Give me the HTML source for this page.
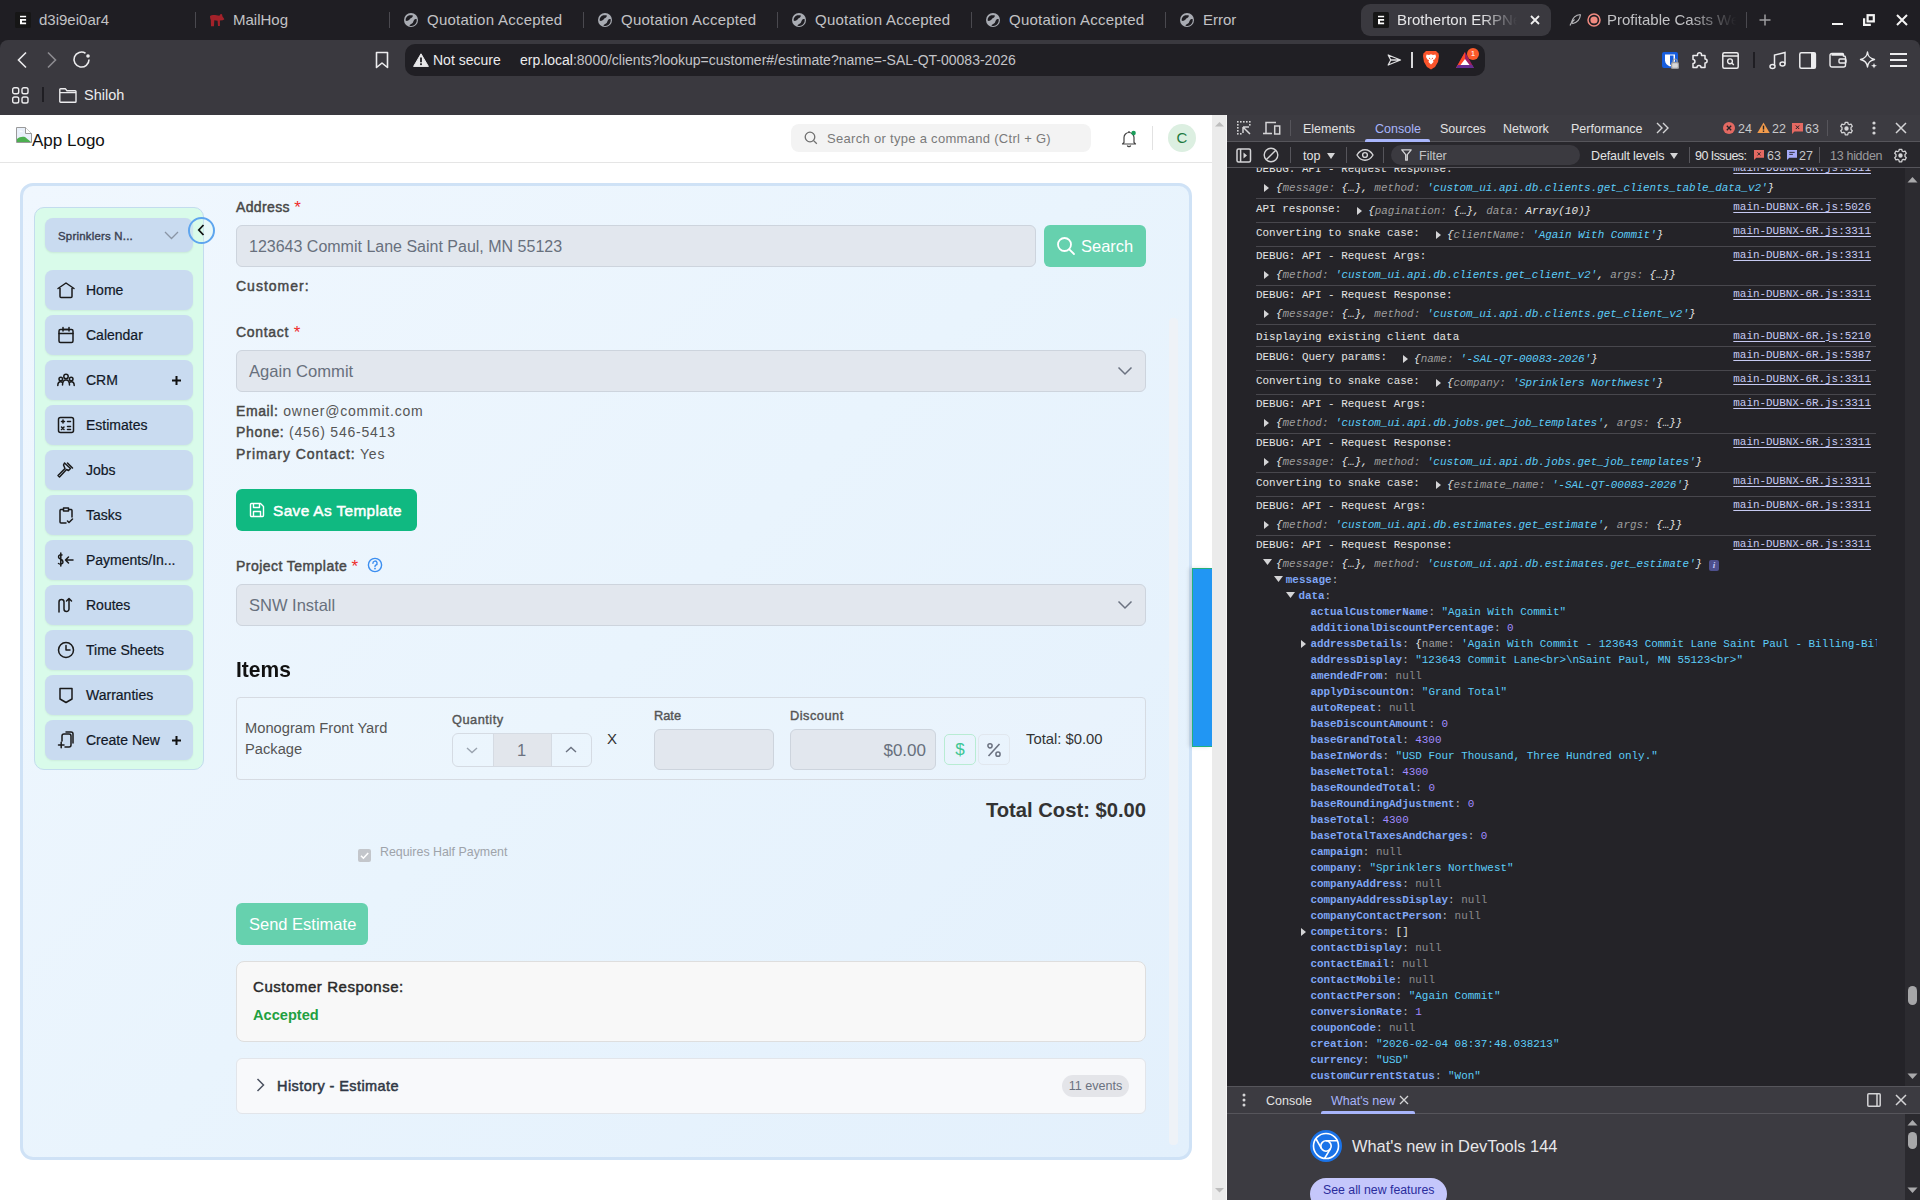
<!DOCTYPE html>
<html><head><meta charset="utf-8">
<style>
*{box-sizing:border-box;margin:0;padding:0}
html,body{width:1920px;height:1200px;overflow:hidden;background:#1f1e23;font-family:"Liberation Sans",sans-serif}
.a{position:absolute}
.t{position:absolute;white-space:nowrap}
svg{display:block}
#tabs{left:0;top:0;width:1920px;height:40px;background:#1f1e23}
.tab{color:#c2c2c5;font-size:15px;line-height:18px;top:11px}
.sep{width:1px;height:16px;background:#4a494f;top:12px}
#toolbar{left:0;top:40px;width:1920px;height:75px;background:#3a393f;border-top-left-radius:8px;border-top-right-radius:8px}
#url{left:405px;top:44px;width:1080px;height:32px;background:#201f24;border-radius:10px}
#page{left:0;top:115px;width:1228px;height:1085px;background:#fff;overflow:hidden}
#dt{left:1228px;top:115px;width:692px;height:1085px;background:#242328;overflow:hidden}
</style></head><body>
<style>
.nav{left:45px;width:148px;height:40px;background:#c9dbf0;border-radius:8px;box-shadow:0 1px 2px rgba(0,0,0,.06)}
.navt{left:86px;font-size:14px;line-height:18px;color:#111827;-webkit-text-stroke:.2px #111827}
</style>
<style>
.lbl{font-size:14px;line-height:17px;color:#474747;-webkit-text-stroke:.45px #474747;letter-spacing:.4px}
.lbl .req{-webkit-text-stroke:0;letter-spacing:0}
.req{color:#ef2b2b;font-size:17px;line-height:0;position:relative;top:1px}
.inp{background:#e2e7ee;border:1px solid #cdd4dd;border-radius:6px}
.val16{font-size:16px;line-height:19px;color:#68707d}
.info{font-size:14px;line-height:17px;color:#555;letter-spacing:.78px}
.info b{font-weight:normal;color:#474747;-webkit-text-stroke:.45px #474747}
.sml{font-size:12.8px;line-height:15px;color:#555;-webkit-text-stroke:.4px #555;letter-spacing:.49px}
</style>
<style>
.mono{font-family:"Liberation Mono",monospace;font-size:10.93px;line-height:14px;color:#e3e3e3}
.mono .w{color:#e3e3e3}.mono .g{color:#9e9e9e}.mono .s{color:#5ccdf8}.mono .n{color:#a18bff}.mono .z{color:#8b8b8d}
.mono .k{color:#7fa6f5;font-weight:bold}.mono .c{color:#b8b8ba}
.lnk{color:#c6c9f2;text-decoration:underline;text-underline-offset:2px}
</style>
<!-- ===== TAB STRIP ===== -->
<div id="tabs" class="a">
 <!-- tab1 -->
 <svg class="a" style="left:15px;top:12px" width="16" height="16" viewBox="0 0 16 16"><rect width="16" height="16" rx="1.5" fill="#161616"/><rect x="5" y="3.8" width="6.1" height="1.5" fill="#fff"/><path d="M5 7.1 H11.1 V8.7 H7 V10.4 H11.1 V12.2 H5 Z" fill="#fff"/></svg>
 <div class="t tab" style="left:39px">d3i9ei0ar4</div>
 <div class="a sep" style="left:195px"></div>
 <!-- tab2 mailhog -->
 <svg class="a" style="left:206px;top:10px" width="22" height="20" viewBox="0 0 22 20"><path d="M4 6 C5 5.2 6 5 7 4.9 C9 4.8 11.5 5.3 13.3 5.7 L14.7 4.1 L16 4.2 L16.5 6.4 C17.3 7.3 18 8.3 18.4 9.3 L16.8 10.3 L13.9 10.6 L13.9 15.9 L12 15.9 L11.6 10.8 L8.3 10.3 L8 16.3 L5 16.3 L4.8 10 C4.3 9 4 7.8 4 6 Z" fill="#a3222a"/></svg>
 <div class="t tab" style="left:233px">MailHog</div>
 <div class="a sep" style="left:389px"></div>
 <!-- globe tabs -->
 <svg class="a globe" style="left:404px;top:13px" width="14" height="14" viewBox="0 0 14 14"><use href="#gl"/></svg>
 <div class="t tab" style="left:427px;letter-spacing:.25px">Quotation Accepted</div>
 <div class="a sep" style="left:583px"></div>
 <svg class="a globe" style="left:598px;top:13px" width="14" height="14" viewBox="0 0 14 14"><use href="#gl"/></svg>
 <div class="t tab" style="left:621px;letter-spacing:.25px">Quotation Accepted</div>
 <div class="a sep" style="left:777px"></div>
 <svg class="a globe" style="left:792px;top:13px" width="14" height="14" viewBox="0 0 14 14"><use href="#gl"/></svg>
 <div class="t tab" style="left:815px;letter-spacing:.25px">Quotation Accepted</div>
 <div class="a sep" style="left:971px"></div>
 <svg class="a globe" style="left:986px;top:13px" width="14" height="14" viewBox="0 0 14 14"><use href="#gl"/></svg>
 <div class="t tab" style="left:1009px;letter-spacing:.25px">Quotation Accepted</div>
 <div class="a sep" style="left:1165px"></div>
 <svg class="a globe" style="left:1180px;top:13px" width="14" height="14" viewBox="0 0 14 14"><use href="#gl"/></svg>
 <div class="t tab" style="left:1203px">Error</div>
 <!-- active tab -->
 <div class="a" style="left:1361px;top:4px;width:190px;height:32px;background:#3a393f;border-radius:9px"></div>
 <svg class="a" style="left:1373px;top:12px" width="16" height="16" viewBox="0 0 16 16"><rect width="16" height="16" rx="1.5" fill="#161616"/><rect x="5" y="3.8" width="6.1" height="1.5" fill="#fff"/><path d="M5 7.1 H11.1 V8.7 H7 V10.4 H11.1 V12.2 H5 Z" fill="#fff"/></svg>
 <div class="t tab" style="left:1397px;width:120px;overflow:hidden;color:#e6e6e8;-webkit-mask-image:linear-gradient(90deg,#000 70%,transparent 100%)">Brotherton ERPNext</div>
 <svg class="a" style="left:1530px;top:15px" width="10" height="10" viewBox="0 0 10 10"><path d="M1 1 L9 9 M9 1 L1 9" stroke="#f0f0f0" stroke-width="1.8"/></svg>
 <!-- tab 9 -->
 <svg class="a" style="left:1568px;top:13px" width="14" height="14" viewBox="0 0 14 14"><path d="M12.5 1.5 C8 2 4.5 5 3.5 9.5 L2 12.5 M12.5 1.5 C12 6 9 9.5 5 10.5 L3.5 9.5 M6.5 6.5 L4 9" stroke="#b5b5b8" stroke-width="1.2" fill="none"/></svg>
 <svg class="a" style="left:1587px;top:13px" width="14" height="14" viewBox="0 0 14 14"><circle cx="7" cy="7" r="6" fill="none" stroke="#f08a80" stroke-width="1.5"/><circle cx="7" cy="7" r="3.6" fill="#f08a80"/></svg>
 <div class="t tab" style="left:1607px;width:132px;overflow:hidden;-webkit-mask-image:linear-gradient(90deg,#000 62%,transparent 98%)">Profitable Casts Webinar</div>
 <div class="a sep" style="left:1746px"></div>
 <svg class="a" style="left:1759px;top:14px" width="12" height="12" viewBox="0 0 12 12"><path d="M6 0.5 V11.5 M0.5 6 H11.5" stroke="#9d9da0" stroke-width="1.5"/></svg>
 <!-- window controls -->
 <div class="a" style="left:1832px;top:22.5px;width:10.5px;height:2.5px;background:#f4f4f4"></div>
 <svg class="a" style="left:1863px;top:14px" width="12" height="12" viewBox="0 0 12 12"><rect x="4.6" y="1.2" width="6.2" height="6.2" fill="none" stroke="#f4f4f4" stroke-width="2.2"/><path d="M1.1 4.2 V10.9 H7.8" fill="none" stroke="#f4f4f4" stroke-width="2.2"/></svg>
 <svg class="a" style="left:1896px;top:14px" width="12" height="12" viewBox="0 0 12 12"><path d="M1 1 L11 11 M11 1 L1 11" stroke="#f4f4f4" stroke-width="2"/></svg>
</div>
<svg width="0" height="0" style="position:absolute"><defs><g id="gl"><circle cx="7" cy="7" r="7" fill="#a9acb3"/><path d="M1.6 7.6 C1.4 5 3 3 5.2 2.3 L8.6 2.2 C9.2 3.3 8.4 4.5 7.2 4.9 C6.2 5.2 6 6 5.3 6.8 C4.4 7.8 2.8 8.2 1.6 7.6 Z" fill="#1f1e23"/><path d="M5.4 12.4 C6.1 11.3 7.4 11 8.3 10.3 C9.2 9.6 9.2 8.4 9.8 7.4 C10.5 6.4 11.7 5.9 12.7 6.2 C13.1 9 11.8 11.6 9.4 12.6 C8 13.2 6.4 13.1 5.4 12.4 Z" fill="#1f1e23"/></g></defs></svg>

<!-- ===== TOOLBAR ===== -->
<div id="toolbar" class="a"></div>
<svg class="a" style="left:16px;top:51px" width="12" height="18" viewBox="0 0 12 18"><path d="M10 1.5 L2.5 9 L10 16.5" fill="none" stroke="#ececee" stroke-width="1.6"/></svg>
<svg class="a" style="left:46px;top:51px" width="12" height="18" viewBox="0 0 12 18"><path d="M2 1.5 L9.5 9 L2 16.5" fill="none" stroke="#8c8b90" stroke-width="1.6"/></svg>
<svg class="a" style="left:72px;top:50px" width="20" height="20" viewBox="0 0 20 20"><path d="M17 9.5 A7.5 7.5 0 1 1 13.5 3.2" fill="none" stroke="#ececee" stroke-width="1.6"/><circle cx="16" cy="6" r="1.8" fill="#ececee"/></svg>
<svg class="a" style="left:375px;top:51px" width="14" height="18" viewBox="0 0 14 18"><path d="M1.5 1.5 H12.5 V16.5 L7 12 L1.5 16.5 Z" fill="none" stroke="#ececee" stroke-width="1.6" stroke-linejoin="round"/></svg>
<div id="url" class="a"></div>
<svg class="a" style="left:413px;top:53px" width="16" height="14" viewBox="0 0 16 14"><path d="M8 0.8 L15.4 13.4 H0.6 Z" fill="#e8e8ea" stroke="#e8e8ea" stroke-linejoin="round" stroke-width="1"/><rect x="7.1" y="4.5" width="1.8" height="4.8" fill="#201f24"/><rect x="7.1" y="10.3" width="1.8" height="1.8" fill="#201f24"/></svg>
<div class="t" style="left:433px;top:51px;font-size:14px;line-height:18px;color:#ececee">Not secure</div>
<div class="t" style="left:520px;top:51px;font-size:14px;line-height:18px;color:#ececee">erp.local<span style="color:#c4c4c8">:8000/clients?lookup=customer#/estimate?name=-SAL-QT-00083-2026</span></div>
<svg class="a" style="left:1387px;top:54px" width="15" height="12" viewBox="0 0 15 12"><path d="M1.2 1 L13.5 6 L1.2 11 L3.8 6 Z M3.8 6 H13" fill="none" stroke="#e0e0e2" stroke-width="1.3" stroke-linejoin="round"/></svg>
<div class="a" style="left:1411px;top:52px;width:2px;height:16px;background:#d8d8da"></div>
<svg class="a" style="left:1422px;top:50px" width="18" height="20" viewBox="0 0 18 20"><path d="M4 1 H14 L16.5 3.5 L17 6 L16 12 L13 17 L9 19.5 L5 17 L2 12 L1 6 L1.5 3.5 Z" fill="#fb542b"/><path d="M4.5 4.5 L7 5 L9 4.3 L11 5 L13.5 4.5 L14 7 L12.5 9.5 L11 10 L11.5 12 L9 14.5 L6.5 12 L7 10 L5.5 9.5 L4 7 Z" fill="#fff"/><path d="M7 8 L8.3 9 M11 8 L9.7 9" stroke="#fb542b" stroke-width="1"/></svg>
<svg class="a" style="left:1455px;top:51px" width="20" height="18" viewBox="0 0 20 18"><path d="M10 1 L19 17 H1 Z" fill="#9e1f63"/><path d="M10 1 L1 17 H6 L10 8 Z" fill="#ff4724"/><path d="M1 17 H19 L17.2 14 H2.8 Z" fill="#662d91"/><path d="M10 8 L14.5 14 H5.5 Z" fill="#fff"/></svg>
<div class="a" style="left:1467px;top:48px;width:12px;height:12px;border-radius:6px;background:#fb5a2b;color:#fff;font-size:8px;line-height:12px;text-align:center">1</div>
<!-- right icons -->
<svg class="a" style="left:1662px;top:52px" width="17" height="17" viewBox="0 0 17 17"><rect x="0" y="0" width="16" height="16" rx="2" fill="#175ddc"/><path d="M3 2.5 H13 V8.5 C13 11.5 10.5 13.5 8 14.5 C5.5 13.5 3 11.5 3 8.5 Z" fill="#fff"/><path d="M8 3.5 H11.5 V8.5 C11.5 10.5 10 12 8 13 Z" fill="#175ddc"/><rect x="9" y="10" width="8" height="7" rx="1.5" fill="#9a9a9e"/><path d="M11 10.5 V9 A2 2 0 0 1 15 9 V10.5" fill="none" stroke="#9a9a9e" stroke-width="1.2"/><rect x="10.2" y="11.3" width="5.6" height="4.5" rx="0.8" fill="#d8d8da"/></svg>
<svg class="a" style="left:1691px;top:51px" width="19" height="18" viewBox="0 0 19 18"><path d="M6.5 3.5 C6.5 1 10.5 1 10.5 3.5 L10.5 4.5 H14 V8 C16.8 8 16.8 12 14 12 V16.5 H10 C10 13.8 6 13.8 6 16.5 H2 V12.5 C4.6 12.5 4.6 8.5 2 8.5 V4.5 H6.5 Z" fill="none" stroke="#ececee" stroke-width="1.5" stroke-linejoin="round"/></svg>
<svg class="a" style="left:1722px;top:52px" width="17" height="17" viewBox="0 0 17 17"><rect x="0.8" y="0.8" width="15.4" height="15.4" rx="1.5" fill="none" stroke="#ececee" stroke-width="1.5"/><path d="M0.8 4 H16.2" stroke="#ececee" stroke-width="1.5"/><circle cx="8" cy="9.3" r="2.4" fill="none" stroke="#ececee" stroke-width="1.4"/><path d="M9.8 11.1 L11.8 13" stroke="#ececee" stroke-width="1.4"/></svg>
<div class="a" style="left:1753px;top:52px;width:2px;height:16px;background:#1f1e23"></div>
<svg class="a" style="left:1769px;top:51px" width="18" height="19" viewBox="0 0 18 19"><path d="M5.5 15 V4 L16 1.5 V12.8" fill="none" stroke="#ececee" stroke-width="1.5"/><ellipse cx="3.5" cy="15.5" rx="2.5" ry="2" fill="none" stroke="#ececee" stroke-width="1.5"/><ellipse cx="13.5" cy="13" rx="2.5" ry="2" fill="none" stroke="#ececee" stroke-width="1.5"/></svg>
<svg class="a" style="left:1799px;top:52px" width="18" height="17" viewBox="0 0 18 17"><rect x="0.8" y="0.8" width="15.6" height="15.4" rx="1.5" fill="none" stroke="#ececee" stroke-width="1.5"/><rect x="12" y="0.8" width="4.4" height="15.4" fill="#ececee"/></svg>
<svg class="a" style="left:1829px;top:52px" width="18" height="16" viewBox="0 0 18 16"><path d="M2.5 3 H14 M1 3.5 A2 2 0 0 1 3 1.5 H13.5 A1 1 0 0 1 14.5 2.5 V4 H15 A1.5 1.5 0 0 1 16.5 5.5 V13 A2 2 0 0 1 14.5 15 H3 A2 2 0 0 1 1 13 Z" fill="none" stroke="#ececee" stroke-width="1.4"/><rect x="10" y="7" width="7" height="4" rx="1" fill="none" stroke="#ececee" stroke-width="1.4"/></svg>
<svg class="a" style="left:1859px;top:51px" width="19" height="18" viewBox="0 0 19 18"><path d="M8.5 1 C9 5.5 10.5 7.5 15.5 8.5 C10.5 9.5 9 11.5 8.5 16 C8 11.5 6 9.5 1.5 8.5 C6 7.5 8 5.5 8.5 1 Z" fill="none" stroke="#ececee" stroke-width="1.4" stroke-linejoin="round"/><path d="M15 12 L15.8 14 L18 14.8 L15.8 15.6 L15 17.6 L14.2 15.6 L12 14.8 L14.2 14 Z" fill="#ececee"/></svg>
<svg class="a" style="left:1890px;top:53px" width="17" height="14" viewBox="0 0 17 14"><path d="M0 1 H17 M0 7 H17 M0 13 H17" stroke="#ececee" stroke-width="1.8"/></svg>
<!-- bookmarks -->
<svg class="a" style="left:12px;top:87px" width="17" height="17" viewBox="0 0 17 17"><g fill="none" stroke="#ececee" stroke-width="1.4"><rect x="0.7" y="0.7" width="6" height="6" rx="1.8"/><rect x="10" y="0.7" width="6" height="6" rx="1.8"/><rect x="0.7" y="10" width="6" height="6" rx="1.8"/><rect x="10" y="10" width="6" height="6" rx="1.8"/></g></svg>
<div class="a" style="left:42px;top:87px;width:2px;height:15px;background:#1f1e23"></div>
<svg class="a" style="left:59px;top:88px" width="18" height="15" viewBox="0 0 18 15"><path d="M0.8 1.6 A0.8 0.8 0 0 1 1.6 0.8 H6.5 L8 2.8 H16.2 A0.8 0.8 0 0 1 17 3.6 V13.4 A0.8 0.8 0 0 1 16.2 14.2 H1.6 A0.8 0.8 0 0 1 0.8 13.4 Z M0.8 4.6 H17" fill="none" stroke="#ececee" stroke-width="1.4" stroke-linejoin="round"/></svg>
<div class="t" style="left:84px;top:86px;font-size:14.5px;line-height:18px;color:#ececee">Shiloh</div>
<!-- ===== PAGE ===== -->
<div id="page" class="a">
 <div class="a" style="left:0;top:47px;width:1212px;height:1px;background:#e5e5e5"></div>
</div>
<!-- header -->
<svg class="a" style="left:16px;top:127px" width="16" height="16" viewBox="0 0 16 16"><path d="M0.5 0.5 H9.5 L15.5 6.5 V15.5 H0.5 Z" fill="#e9f0fa" stroke="#9a9a9a" stroke-width="1"/><path d="M9.5 0.5 V6.5 H15.5" fill="#fff" stroke="#9a9a9a"/><path d="M1 15 V12 C3 10 6 9.5 9 10 L15 15 Z" fill="#4caf50"/><path d="M3 4 C4 3 6 3.5 7 4.5 C6 5 4 5 3 4Z" fill="#fff"/></svg>
<div class="t" style="left:32px;top:130.5px;font-size:17px;line-height:20px;color:#111">App Logo</div>
<div class="a" style="left:791px;top:124px;width:300px;height:28px;background:#f3f3f3;border-radius:8px"></div>
<svg class="a" style="left:804px;top:131px" width="14" height="14" viewBox="0 0 14 14"><circle cx="6" cy="6" r="4.8" fill="none" stroke="#6f6f6f" stroke-width="1.3"/><path d="M9.6 9.6 L12.8 12.8" stroke="#6f6f6f" stroke-width="1.3"/></svg>
<div class="t" style="left:827px;top:131px;font-size:13px;line-height:16px;color:#7a7a7a;letter-spacing:.3px">Search or type a command (Ctrl + G)</div>
<svg class="a" style="left:1120px;top:129px" width="18" height="19" viewBox="0 0 18 19"><path d="M4 13.5 V8.5 A5 5 0 0 1 9 3.5 A5 5 0 0 1 14 8.5 V13.5 L15.5 15 H2.5 Z" fill="none" stroke="#444" stroke-width="1.2" stroke-linejoin="round"/><path d="M7.3 16.5 A1.8 1.8 0 0 0 10.7 16.5" fill="none" stroke="#444" stroke-width="1.2"/><path d="M9 2 V3.5" stroke="#444" stroke-width="1.2"/><circle cx="13.6" cy="4" r="2.2" fill="#1a9e5a"/></svg>
<div class="a" style="left:1152px;top:126px;width:1px;height:24px;background:#e2e2e2"></div>
<div class="a" style="left:1168px;top:124px;width:28px;height:28px;border-radius:14px;background:#dcefe1;color:#1d7a3f;font-size:15px;line-height:28px;text-align:center">C</div>

<!-- panel -->
<div class="a" style="left:20px;top:183px;width:1172px;height:977px;border:3px solid #cfe2f6;border-radius:13px;background:linear-gradient(135deg,#f0f7fe 0%,#e9f4fd 50%,#e3f0fc 100%)"></div>
<div class="a" style="left:1169px;top:318px;width:9px;height:827px;background:#eef2f7;border-radius:4px"></div>

<!-- sidebar -->
<div class="a" style="left:34px;top:207px;width:170px;height:563px;background:#d9fbea;border:1px solid #c3dcee;border-radius:10px"></div>
<div class="a" style="left:45px;top:218px;width:148px;height:34px;background:#c9dbf0;border-radius:8px;box-shadow:0 1px 2px rgba(0,0,0,.08)"></div>
<div class="t" style="left:58px;top:228.5px;font-size:11.4px;line-height:15px;color:#3b4252;-webkit-text-stroke:.4px #3b4252;letter-spacing:.23px">Sprinklers N...</div>
<svg class="a" style="left:164px;top:231px" width="15" height="9" viewBox="0 0 15 9"><path d="M1 1 L7.5 7.5 L14 1" fill="none" stroke="#8a95a5" stroke-width="1.3"/></svg>
<div class="a" style="left:188px;top:217px;width:27px;height:27px;border-radius:14px;border:2px solid #5ea5ee;background:rgba(217,251,234,.3)"></div>
<svg class="a" style="left:197px;top:224px" width="8" height="12" viewBox="0 0 8 12"><path d="M6.5 1 L1.8 6 L6.5 11" fill="none" stroke="#111" stroke-width="1.8"/></svg>
<div class="a nav" style="top:270px"></div>
<svg class="a" style="left:56px;top:280px" width="20" height="20" viewBox="0 0 20 20" fill="none" stroke="#1a1a1a" stroke-width="1.5" stroke-linecap="round" stroke-linejoin="round"><path d="M2 8.5 L10 3 L18 8.5 M4 8 V16.5 A1 1 0 0 0 5 17.5 H15 A1 1 0 0 0 16 16.5 V8"/></svg>
<div class="t navt" style="top:281px">Home</div>
<div class="a nav" style="top:315px"></div>
<svg class="a" style="left:56px;top:325px" width="20" height="20" viewBox="0 0 20 20" fill="none" stroke="#1a1a1a" stroke-width="1.5" stroke-linecap="round" stroke-linejoin="round"><rect x="3" y="4.5" width="14" height="13" rx="1.5"/><path d="M3 8.5 H17 M7 2.5 V6 M13 2.5 V6 M7 4.5 H13"/></svg>
<div class="t navt" style="top:326px">Calendar</div>
<div class="a nav" style="top:360px"></div>
<svg class="a" style="left:56px;top:370px" width="20" height="20" viewBox="0 0 20 20" fill="none" stroke="#1a1a1a" stroke-width="1.5" stroke-linecap="round" stroke-linejoin="round"><circle cx="10" cy="6.5" r="2.2"/><path d="M6.5 15 C6.5 11.5 7.8 10 10 10 C12.2 10 13.5 11.5 13.5 15"/><circle cx="4.8" cy="9" r="1.8"/><path d="M1.8 15.5 C1.8 12.8 2.8 11.8 4.8 11.8 C5.5 11.8 6 12 6.4 12.3"/><circle cx="15.2" cy="9" r="1.8"/><path d="M18.2 15.5 C18.2 12.8 17.2 11.8 15.2 11.8 C14.5 11.8 14 12 13.6 12.3"/></svg>
<div class="t navt" style="top:371px">CRM</div>
<svg class="a" style="left:172px;top:376px" width="9" height="9" viewBox="0 0 9 9"><path d="M4.5 0 V9 M0 4.5 H9" stroke="#111" stroke-width="2"/></svg>
<div class="a nav" style="top:405px"></div>
<svg class="a" style="left:56px;top:415px" width="20" height="20" viewBox="0 0 20 20" fill="none" stroke="#1a1a1a" stroke-width="1.5" stroke-linecap="round" stroke-linejoin="round"><rect x="2.5" y="2.5" width="15" height="15" rx="2"/><path d="M5.5 6.5 H8.5 M7 5 V8 M11.5 6.5 H14.5 M5.5 12 L8 14.5 M8 12 L5.5 14.5 M11.5 11.6 H14.5 M11.5 14.4 H14.5"/></svg>
<div class="t navt" style="top:416px">Estimates</div>
<div class="a nav" style="top:450px"></div>
<svg class="a" style="left:56px;top:460px" width="20" height="20" viewBox="0 0 20 20" fill="none" stroke="#1a1a1a" stroke-width="1.5" stroke-linecap="round" stroke-linejoin="round"><path d="M8.5 3 L14.5 8.5 L12.5 10.5 L10.5 9.5 L3.5 17 L2 15.5 L9 8.5 L7.5 5 Z M11.5 3 L16.5 8"/></svg>
<div class="t navt" style="top:461px">Jobs</div>
<div class="a nav" style="top:495px"></div>
<svg class="a" style="left:56px;top:505px" width="20" height="20" viewBox="0 0 20 20" fill="none" stroke="#1a1a1a" stroke-width="1.5" stroke-linecap="round" stroke-linejoin="round"><path d="M7 4.5 H5 A1 1 0 0 0 4 5.5 V17 A1 1 0 0 0 5 18 H10 M13 4.5 H15 A1 1 0 0 1 16 5.5 V12 M7.5 3 H12.5 V6 H7.5 Z M11.5 16 L13 17.5 L16.5 14"/></svg>
<div class="t navt" style="top:506px">Tasks</div>
<div class="a nav" style="top:540px"></div>
<svg class="a" style="left:56px;top:550px" width="20" height="20" viewBox="0 0 20 20" fill="none" stroke="#1a1a1a" stroke-width="1.5" stroke-linecap="round" stroke-linejoin="round"><path d="M6 5 C5 4.5 2.5 4.5 2.5 7 C2.5 9.5 7 8.5 7 12 C7 14.5 4 14.5 2.5 13.5 M4.8 3 V16 M17 10 H9.5 M12.5 7 L9.5 10 L12.5 13"/></svg>
<div class="t navt" style="top:551px">Payments/In...</div>
<div class="a nav" style="top:585px"></div>
<svg class="a" style="left:56px;top:595px" width="20" height="20" viewBox="0 0 20 20" fill="none" stroke="#1a1a1a" stroke-width="1.5" stroke-linecap="round" stroke-linejoin="round"><path d="M3 17 V7 A2.5 2.5 0 0 1 8 7 V14 A2.5 2.5 0 0 0 13 14 V3.5 M10.5 6 L13 3.5 L15.5 6"/></svg>
<div class="t navt" style="top:596px">Routes</div>
<div class="a nav" style="top:630px"></div>
<svg class="a" style="left:56px;top:640px" width="20" height="20" viewBox="0 0 20 20" fill="none" stroke="#1a1a1a" stroke-width="1.5" stroke-linecap="round" stroke-linejoin="round"><circle cx="10" cy="10" r="7.5"/><path d="M10 5.5 V10 H14"/></svg>
<div class="t navt" style="top:641px">Time Sheets</div>
<div class="a nav" style="top:675px"></div>
<svg class="a" style="left:56px;top:685px" width="20" height="20" viewBox="0 0 20 20" fill="none" stroke="#1a1a1a" stroke-width="1.5" stroke-linecap="round" stroke-linejoin="round"><path d="M4 3.5 H16 V14 L10 17.5 L4 14 Z"/></svg>
<div class="t navt" style="top:686px">Warranties</div>
<div class="a nav" style="top:720px"></div>
<svg class="a" style="left:56px;top:730px" width="20" height="20" viewBox="0 0 20 20" fill="none" stroke="#1a1a1a" stroke-width="1.5" stroke-linecap="round" stroke-linejoin="round"><path d="M8 4 H13 A2 2 0 0 1 15 6 V15 A2 2 0 0 1 13 17 H9 M8 4 A2 2 0 0 0 6 6 V11 M10 2 H15 A2 2 0 0 1 17 4 V13 M2.5 15 H8 M5.2 12.3 V17.7"/></svg>
<div class="t navt" style="top:731px">Create New</div>
<svg class="a" style="left:172px;top:736px" width="9" height="9" viewBox="0 0 9 9"><path d="M4.5 0 V9 M0 4.5 H9" stroke="#111" stroke-width="2"/></svg>
<!-- main form -->
<div class="t lbl" style="left:236px;top:199px;letter-spacing:.37px">Address <span class="req">*</span></div>
<div class="a inp" style="left:236px;top:225px;width:800px;height:42px"></div>
<div class="t val16" style="left:249px;top:237px">123643 Commit Lane Saint Paul, MN 55123</div>
<div class="a" style="left:1044px;top:225px;width:102px;height:42px;background:#66d1ae;border-radius:6px"></div>
<svg class="a" style="left:1056px;top:236px" width="20" height="20" viewBox="0 0 20 20"><circle cx="8.5" cy="8.5" r="6.5" fill="none" stroke="#fff" stroke-width="1.8"/><path d="M13.3 13.3 L18 18" stroke="#fff" stroke-width="1.8" stroke-linecap="round"/></svg>
<div class="t" style="left:1081px;top:237px;font-size:16.5px;line-height:19px;color:#fff">Search</div>
<div class="t lbl" style="left:236px;top:278px;letter-spacing:1px">Customer:</div>

<div class="t lbl" style="left:236px;top:324px;letter-spacing:.69px">Contact <span class="req">*</span></div>
<div class="a inp" style="left:236px;top:350px;width:910px;height:42px"></div>
<div class="t val16" style="left:249px;top:362px;font-size:16.6px">Again Commit</div>
<svg class="a" style="left:1117px;top:366px" width="16" height="10" viewBox="0 0 16 10"><path d="M1.5 1.5 L8 8 L14.5 1.5" fill="none" stroke="#6b7280" stroke-width="1.5"/></svg>

<div class="t info" style="left:236px;top:403px"><b style="letter-spacing:.6px">Email:</b> owner@commit.com</div>
<div class="t info" style="left:236px;top:424px"><b style="letter-spacing:.67px">Phone:</b> (456) 546-5413</div>
<div class="t info" style="left:236px;top:446px"><b style="letter-spacing:.96px">Primary Contact:</b> Yes</div>

<div class="a" style="left:236px;top:489px;width:181px;height:42px;background:#10b981;border-radius:6px"></div>
<svg class="a" style="left:249px;top:502px" width="16" height="16" viewBox="0 0 16 16" fill="none" stroke="#fff" stroke-width="1.4" stroke-linejoin="round"><path d="M1.5 2.5 A1 1 0 0 1 2.5 1.5 H11.5 L14.5 4.5 V13.5 A1 1 0 0 1 13.5 14.5 H2.5 A1 1 0 0 1 1.5 13.5 Z"/><path d="M4.5 1.5 V5.5 H10.5 V1.5 M4.5 14.5 V9.5 H11.5 V14.5"/></svg>
<div class="t" style="left:273px;top:501.5px;font-size:15.4px;line-height:18px;color:#fff;-webkit-text-stroke:.5px #fff;letter-spacing:.37px">Save As Template</div>

<div class="t lbl" style="left:236px;top:558px;letter-spacing:.45px">Project Template <span class="req">*</span></div>
<svg class="a" style="left:367px;top:557px" width="16" height="16" viewBox="0 0 16 16"><circle cx="8" cy="8" r="6.6" fill="none" stroke="#3b8ef0" stroke-width="1.4"/><path d="M5.9 6.2 A2.1 2.1 0 1 1 8.8 8.1 C8.2 8.4 8 8.8 8 9.5" fill="none" stroke="#3b8ef0" stroke-width="1.4" stroke-linecap="round"/><circle cx="8" cy="11.6" r="0.9" fill="#3b8ef0"/></svg>
<div class="a inp" style="left:236px;top:584px;width:910px;height:42px"></div>
<div class="t val16" style="left:249px;top:596px;font-size:16.5px">SNW Install</div>
<svg class="a" style="left:1117px;top:600px" width="16" height="10" viewBox="0 0 16 10"><path d="M1.5 1.5 L8 8 L14.5 1.5" fill="none" stroke="#6b7280" stroke-width="1.5"/></svg>

<div class="t" style="left:236px;top:658px;font-size:21px;line-height:24px;font-weight:bold;color:#111;transform:scaleY(1.08);transform-origin:0 19px">Items</div>
<div class="a" style="left:236px;top:697px;width:910px;height:83px;border:1px solid #d6dbe2;border-radius:4px;background:rgba(255,255,255,.12)"></div>
<div class="t" style="left:245px;top:718px;font-size:14.7px;line-height:21px;color:#555;white-space:normal;width:180px">Monogram Front Yard Package</div>
<div class="t sml" style="left:452px;top:711.5px">Quantity</div>
<div class="a" style="left:452px;top:733px;width:140px;height:34px;border:1px solid #d5dbe3;border-radius:6px;overflow:hidden"><div class="a" style="left:40px;top:0;width:59px;height:32px;background:#e2e6ec;border-left:1px solid #d5dbe3;border-right:1px solid #d5dbe3"></div></div>
<svg class="a" style="left:466px;top:747px" width="12" height="7" viewBox="0 0 12 7"><path d="M1 1 L6 5.5 L11 1" fill="none" stroke="#9aa3af" stroke-width="1.4"/></svg>
<svg class="a" style="left:565px;top:746px" width="12" height="7" viewBox="0 0 12 7"><path d="M1 6 L6 1.5 L11 6" fill="none" stroke="#6b7280" stroke-width="1.4"/></svg>
<div class="t" style="left:517px;top:741px;font-size:16.5px;line-height:19px;color:#6b7280">1</div>
<div class="t" style="left:607px;top:730px;font-size:15px;line-height:18px;color:#333">X</div>
<div class="t sml" style="left:654px;top:707.7px;letter-spacing:0">Rate</div>
<div class="a inp" style="left:654px;top:729px;width:120px;height:41px"></div>
<div class="t sml" style="left:790px;top:707.7px">Discount</div>
<div class="a inp" style="left:790px;top:729px;width:146px;height:41px"></div>
<div class="t val16" style="left:790px;top:741px;width:136px;text-align:right;font-size:17px">$0.00</div>
<div class="a" style="left:944px;top:734px;width:32px;height:31px;border:1px solid #b8ecd3;border-radius:5px"></div>
<div class="t" style="left:944px;top:740px;width:32px;text-align:center;font-size:17px;line-height:19px;color:#3ec795">$</div>
<div class="a" style="left:978px;top:734px;width:32px;height:31px;border:1px solid #e1e7ee;border-radius:5px"></div>
<svg class="a" style="left:986px;top:742px" width="16" height="16" viewBox="0 0 16 16"><path d="M13.5 2 L2.5 14" stroke="#6b7280" stroke-width="1.6"/><circle cx="4" cy="3.8" r="2.1" fill="none" stroke="#6b7280" stroke-width="1.5"/><circle cx="12" cy="12.2" r="2.1" fill="none" stroke="#6b7280" stroke-width="1.5"/></svg>
<div class="t" style="left:1026px;top:731px;font-size:14.8px;line-height:17px;color:#333">Total: $0.00</div>

<div class="t" style="left:936px;top:799px;width:210px;text-align:right;font-size:20.2px;line-height:23px;font-weight:bold;color:#333">Total Cost: $0.00</div>

<div class="a" style="left:358px;top:849px;width:13px;height:13px;border-radius:2px;background:#c3c6cb"></div>
<svg class="a" style="left:359px;top:850px" width="11" height="11" viewBox="0 0 11 11"><path d="M2 5.8 L4.4 8.2 L9.2 3" fill="none" stroke="#fff" stroke-width="1.6"/></svg>
<div class="t" style="left:380px;top:845px;font-size:12.4px;line-height:15px;color:#9ea3aa">Requires Half Payment</div>

<div class="a" style="left:236px;top:903px;width:132px;height:42px;background:#66d1ae;border-radius:6px"></div>
<div class="t" style="left:249px;top:915px;font-size:16.5px;line-height:19px;color:#fff">Send Estimate</div>

<div class="a" style="left:236px;top:961px;width:910px;height:81px;background:#f8f8f8;border:1px solid #dedede;border-radius:8px"></div>
<div class="t" style="left:253px;top:978px;font-size:15px;line-height:18px;color:#2a2a2a;letter-spacing:.55px;-webkit-text-stroke:.45px #2a2a2a">Customer Response:</div>
<div class="t" style="left:253px;top:1006px;font-size:14.6px;line-height:18px;font-weight:bold;color:#22a040">Accepted</div>

<div class="a" style="left:236px;top:1058px;width:910px;height:56px;background:#f8f9fb;border:1px solid #e2e5ea;border-radius:6px"></div>
<svg class="a" style="left:256px;top:1078px" width="9" height="14" viewBox="0 0 9 14"><path d="M1.5 1 L7.5 7 L1.5 13" fill="none" stroke="#4b5260" stroke-width="1.5"/></svg>
<div class="t" style="left:277px;top:1078px;font-size:14.5px;line-height:17px;color:#303846;-webkit-text-stroke:.5px #303846;letter-spacing:.42px">History - Estimate</div>
<div class="a" style="left:1062px;top:1075px;width:67px;height:22px;border-radius:11px;background:#e4e5e9"></div>
<div class="t" style="left:1062px;top:1078px;width:67px;text-align:center;font-size:12.6px;line-height:16px;color:#6b7280">11 events</div>

<!-- app scrollbar + page scrollbar -->
<div class="a" style="left:1192px;top:163px;width:20px;height:1037px;background:#fff"></div>
<div class="a" style="left:1192px;top:568px;width:20px;height:179px;background:#2196f3;border-left:1px solid #23b07d;border-top:1px solid #23b07d;border-bottom:1px solid #23b07d;box-shadow:-3px 0 4px rgba(0,0,0,.12)"></div>
<div class="a" style="left:1212px;top:115px;width:14px;height:1085px;background:#ebebeb"></div>
<svg class="a" style="left:1212px;top:119px" width="15" height="10" viewBox="0 0 15 10"><path d="M3 7.5 L7.5 3 L12 7.5 Z" fill="#bdbdbd"/></svg>
<svg class="a" style="left:1212px;top:1185px" width="15" height="10" viewBox="0 0 15 10"><path d="M3 3 L7.5 7.5 L12 3 Z" fill="#bdbdbd"/></svg>
<div class="a" style="left:1226px;top:115px;width:1px;height:1085px;background:#f7f7f7"></div>
<div class="a" style="left:1227px;top:168px;width:693px;height:918px;background:#242328;overflow:hidden" id="con">
</div>
<div class="t mono" style="left:1256.0px;top:162.4px;">DEBUG: API - Request Response:</div>
<div class="t mono" style="left:1733.3px;top:161.2px;"><span class="lnk">main-DUBNX-6R.js:3311</span></div>
<svg class="a" style="left:1263.5px;top:183.60000000000002px" width="5" height="8" viewBox="0 0 5 8"><path d="M0 0 L5 4 L0 8 Z" fill="#d4d4d6"/></svg>
<div class="t mono" style="left:1276.0px;top:180.7px;font-style:italic"><span class="w">{</span><span class="g">message</span><span class="g">: </span><span class="w">{…}</span><span class="w">, </span><span class="g">method</span><span class="g">: </span><span class="s">&#x27;custom_ui.api.db.clients.get_clients_table_data_v2&#x27;</span><span class="w">}</span></div>
<div class="a" style="left:1256px;top:198.3px;width:620px;height:1px;background:#48474d"></div>
<div class="t mono" style="left:1256.0px;top:201.6px;">API response:</div>
<div class="t mono" style="left:1733.3px;top:200.4px;"><span class="lnk">main-DUBNX-6R.js:5026</span></div>
<svg class="a" style="left:1356.5px;top:206.60000000000002px" width="5" height="8" viewBox="0 0 5 8"><path d="M0 0 L5 4 L0 8 Z" fill="#d4d4d6"/></svg>
<div class="t mono" style="left:1368.2px;top:203.7px;font-style:italic"><span class="w">{</span><span class="g">pagination</span><span class="g">: </span><span class="w">{…}</span><span class="w">, </span><span class="g">data</span><span class="g">: </span><span class="w">Array(10)}</span></div>
<div class="a" style="left:1256px;top:222.3px;width:620px;height:1px;background:#48474d"></div>
<div class="t mono" style="left:1256.0px;top:225.6px;">Converting to snake case:</div>
<div class="t mono" style="left:1733.3px;top:224.4px;"><span class="lnk">main-DUBNX-6R.js:3311</span></div>
<svg class="a" style="left:1435.5px;top:230.60000000000002px" width="5" height="8" viewBox="0 0 5 8"><path d="M0 0 L5 4 L0 8 Z" fill="#d4d4d6"/></svg>
<div class="t mono" style="left:1446.9px;top:227.7px;font-style:italic"><span class="w">{</span><span class="g">clientName</span><span class="g">: </span><span class="s">&#x27;Again With Commit&#x27;</span><span class="w">}</span></div>
<div class="a" style="left:1256px;top:246.3px;width:620px;height:1px;background:#48474d"></div>
<div class="t mono" style="left:1256.0px;top:249.4px;">DEBUG: API - Request Args:</div>
<div class="t mono" style="left:1733.3px;top:248.2px;"><span class="lnk">main-DUBNX-6R.js:3311</span></div>
<svg class="a" style="left:1263.5px;top:270.6px" width="5" height="8" viewBox="0 0 5 8"><path d="M0 0 L5 4 L0 8 Z" fill="#d4d4d6"/></svg>
<div class="t mono" style="left:1276.0px;top:267.7px;font-style:italic"><span class="w">{</span><span class="g">method</span><span class="g">: </span><span class="s">&#x27;custom_ui.api.db.clients.get_client_v2&#x27;</span><span class="w">, </span><span class="g">args</span><span class="g">: </span><span class="w">{…}}</span></div>
<div class="a" style="left:1256px;top:285.3px;width:620px;height:1px;background:#48474d"></div>
<div class="t mono" style="left:1256.0px;top:288.4px;">DEBUG: API - Request Response:</div>
<div class="t mono" style="left:1733.3px;top:287.2px;"><span class="lnk">main-DUBNX-6R.js:3311</span></div>
<svg class="a" style="left:1263.5px;top:309.6px" width="5" height="8" viewBox="0 0 5 8"><path d="M0 0 L5 4 L0 8 Z" fill="#d4d4d6"/></svg>
<div class="t mono" style="left:1276.0px;top:306.7px;font-style:italic"><span class="w">{</span><span class="g">message</span><span class="g">: </span><span class="w">{…}</span><span class="w">, </span><span class="g">method</span><span class="g">: </span><span class="s">&#x27;custom_ui.api.db.clients.get_client_v2&#x27;</span><span class="w">}</span></div>
<div class="a" style="left:1256px;top:324.3px;width:620px;height:1px;background:#48474d"></div>
<div class="t mono" style="left:1256.0px;top:329.9px;">Displaying existing client data</div>
<div class="t mono" style="left:1733.3px;top:328.7px;"><span class="lnk">main-DUBNX-6R.js:5210</span></div>
<div class="a" style="left:1256px;top:346.3px;width:620px;height:1px;background:#48474d"></div>
<div class="t mono" style="left:1256.0px;top:349.6px;">DEBUG: Query params:</div>
<div class="t mono" style="left:1733.3px;top:348.4px;"><span class="lnk">main-DUBNX-6R.js:5387</span></div>
<svg class="a" style="left:1402.5px;top:354.6px" width="5" height="8" viewBox="0 0 5 8"><path d="M0 0 L5 4 L0 8 Z" fill="#d4d4d6"/></svg>
<div class="t mono" style="left:1414.1px;top:351.7px;font-style:italic"><span class="w">{</span><span class="g">name</span><span class="g">: </span><span class="s">&#x27;-SAL-QT-00083-2026&#x27;</span><span class="w">}</span></div>
<div class="a" style="left:1256px;top:370.3px;width:620px;height:1px;background:#48474d"></div>
<div class="t mono" style="left:1256.0px;top:373.6px;">Converting to snake case:</div>
<div class="t mono" style="left:1733.3px;top:372.4px;"><span class="lnk">main-DUBNX-6R.js:3311</span></div>
<svg class="a" style="left:1435.5px;top:378.6px" width="5" height="8" viewBox="0 0 5 8"><path d="M0 0 L5 4 L0 8 Z" fill="#d4d4d6"/></svg>
<div class="t mono" style="left:1446.9px;top:375.7px;font-style:italic"><span class="w">{</span><span class="g">company</span><span class="g">: </span><span class="s">&#x27;Sprinklers Northwest&#x27;</span><span class="w">}</span></div>
<div class="a" style="left:1256px;top:394.3px;width:620px;height:1px;background:#48474d"></div>
<div class="t mono" style="left:1256.0px;top:397.4px;">DEBUG: API - Request Args:</div>
<div class="t mono" style="left:1733.3px;top:396.2px;"><span class="lnk">main-DUBNX-6R.js:3311</span></div>
<svg class="a" style="left:1263.5px;top:418.6px" width="5" height="8" viewBox="0 0 5 8"><path d="M0 0 L5 4 L0 8 Z" fill="#d4d4d6"/></svg>
<div class="t mono" style="left:1276.0px;top:415.7px;font-style:italic"><span class="w">{</span><span class="g">method</span><span class="g">: </span><span class="s">&#x27;custom_ui.api.db.jobs.get_job_templates&#x27;</span><span class="w">, </span><span class="g">args</span><span class="g">: </span><span class="w">{…}}</span></div>
<div class="a" style="left:1256px;top:433.3px;width:620px;height:1px;background:#48474d"></div>
<div class="t mono" style="left:1256.0px;top:436.4px;">DEBUG: API - Request Response:</div>
<div class="t mono" style="left:1733.3px;top:435.2px;"><span class="lnk">main-DUBNX-6R.js:3311</span></div>
<svg class="a" style="left:1263.5px;top:457.6px" width="5" height="8" viewBox="0 0 5 8"><path d="M0 0 L5 4 L0 8 Z" fill="#d4d4d6"/></svg>
<div class="t mono" style="left:1276.0px;top:454.7px;font-style:italic"><span class="w">{</span><span class="g">message</span><span class="g">: </span><span class="w">{…}</span><span class="w">, </span><span class="g">method</span><span class="g">: </span><span class="s">&#x27;custom_ui.api.db.jobs.get_job_templates&#x27;</span><span class="w">}</span></div>
<div class="a" style="left:1256px;top:472.3px;width:620px;height:1px;background:#48474d"></div>
<div class="t mono" style="left:1256.0px;top:475.6px;">Converting to snake case:</div>
<div class="t mono" style="left:1733.3px;top:474.4px;"><span class="lnk">main-DUBNX-6R.js:3311</span></div>
<svg class="a" style="left:1435.5px;top:480.6px" width="5" height="8" viewBox="0 0 5 8"><path d="M0 0 L5 4 L0 8 Z" fill="#d4d4d6"/></svg>
<div class="t mono" style="left:1446.9px;top:477.7px;font-style:italic"><span class="w">{</span><span class="g">estimate_name</span><span class="g">: </span><span class="s">&#x27;-SAL-QT-00083-2026&#x27;</span><span class="w">}</span></div>
<div class="a" style="left:1256px;top:496.3px;width:620px;height:1px;background:#48474d"></div>
<div class="t mono" style="left:1256.0px;top:499.4px;">DEBUG: API - Request Args:</div>
<div class="t mono" style="left:1733.3px;top:498.2px;"><span class="lnk">main-DUBNX-6R.js:3311</span></div>
<svg class="a" style="left:1263.5px;top:520.6px" width="5" height="8" viewBox="0 0 5 8"><path d="M0 0 L5 4 L0 8 Z" fill="#d4d4d6"/></svg>
<div class="t mono" style="left:1276.0px;top:517.7px;font-style:italic"><span class="w">{</span><span class="g">method</span><span class="g">: </span><span class="s">&#x27;custom_ui.api.db.estimates.get_estimate&#x27;</span><span class="w">, </span><span class="g">args</span><span class="g">: </span><span class="w">{…}}</span></div>
<div class="a" style="left:1256px;top:535.3px;width:620px;height:1px;background:#48474d"></div>
<div class="t mono" style="left:1256.0px;top:538.4px;">DEBUG: API - Request Response:</div>
<div class="t mono" style="left:1733.3px;top:537.2px;"><span class="lnk">main-DUBNX-6R.js:3311</span></div>
<svg class="a" style="left:1263px;top:559.0999999999999px" width="9" height="6" viewBox="0 0 9 6"><path d="M0 0 H9 L4.5 6 Z" fill="#d4d4d6"/></svg>
<div class="t mono" style="left:1276.0px;top:556.7px;font-style:italic"><span class="w">{</span><span class="g">message</span><span class="g">: </span><span class="w">{…}</span><span class="w">, </span><span class="g">method</span><span class="g">: </span><span class="s">&#x27;custom_ui.api.db.estimates.get_estimate&#x27;</span><span class="w">}</span></div>
<div class="a" style="left:1709px;top:559.8px;width:10px;height:11px;background:#4d4f8c;border-radius:2px;color:#c8caf8;font:italic bold 9px/11px Liberation Serif;text-align:center">i</div>
<svg class="a" style="left:1274px;top:576px" width="9" height="6" viewBox="0 0 9 6"><path d="M0 0 H9 L4.5 6 Z" fill="#d4d4d6"/></svg>
<div class="t mono" style="left:1285.8px;top:573.1px;"><span class="k">message</span><span class="c">:</span></div>
<svg class="a" style="left:1286px;top:592px" width="9" height="6" viewBox="0 0 9 6"><path d="M0 0 H9 L4.5 6 Z" fill="#d4d4d6"/></svg>
<div class="t mono" style="left:1298.4px;top:589.1px;"><span class="k">data</span><span class="c">:</span></div>
<div class="t mono" style="left:1310.4px;top:605.1px;"><span class="k">actualCustomerName</span><span class="c">: </span><span class="s">&quot;Again With Commit&quot;</span></div>
<div class="t mono" style="left:1310.4px;top:621.1px;"><span class="k">additionalDiscountPercentage</span><span class="c">: </span><span class="n">0</span></div>
<svg class="a" style="left:1300.5px;top:640.0px" width="5" height="8" viewBox="0 0 5 8"><path d="M0 0 L5 4 L0 8 Z" fill="#d4d4d6"/></svg>
<div class="t mono" style="left:1310.4px;top:637.1px;width:567px;overflow:hidden"><span class="k">addressDetails</span><span class="c">: </span><span class="w">{</span><span class="g">name</span><span class="g">: </span><span class="s">&#x27;Again With Commit - 123643 Commit Lane Saint Paul - Billing-Billing&#x27;</span></div>
<div class="t mono" style="left:1310.4px;top:653.1px;"><span class="k">addressDisplay</span><span class="c">: </span><span class="s">&quot;123643 Commit Lane&lt;br&gt;\nSaint Paul, MN 55123&lt;br&gt;&quot;</span></div>
<div class="t mono" style="left:1310.4px;top:669.1px;"><span class="k">amendedFrom</span><span class="c">: </span><span class="z">null</span></div>
<div class="t mono" style="left:1310.4px;top:685.1px;"><span class="k">applyDiscountOn</span><span class="c">: </span><span class="s">&quot;Grand Total&quot;</span></div>
<div class="t mono" style="left:1310.4px;top:701.1px;"><span class="k">autoRepeat</span><span class="c">: </span><span class="z">null</span></div>
<div class="t mono" style="left:1310.4px;top:717.1px;"><span class="k">baseDiscountAmount</span><span class="c">: </span><span class="n">0</span></div>
<div class="t mono" style="left:1310.4px;top:733.1px;"><span class="k">baseGrandTotal</span><span class="c">: </span><span class="n">4300</span></div>
<div class="t mono" style="left:1310.4px;top:749.1px;"><span class="k">baseInWords</span><span class="c">: </span><span class="s">&quot;USD Four Thousand, Three Hundred only.&quot;</span></div>
<div class="t mono" style="left:1310.4px;top:765.1px;"><span class="k">baseNetTotal</span><span class="c">: </span><span class="n">4300</span></div>
<div class="t mono" style="left:1310.4px;top:781.1px;"><span class="k">baseRoundedTotal</span><span class="c">: </span><span class="n">0</span></div>
<div class="t mono" style="left:1310.4px;top:797.1px;"><span class="k">baseRoundingAdjustment</span><span class="c">: </span><span class="n">0</span></div>
<div class="t mono" style="left:1310.4px;top:813.1px;"><span class="k">baseTotal</span><span class="c">: </span><span class="n">4300</span></div>
<div class="t mono" style="left:1310.4px;top:829.1px;"><span class="k">baseTotalTaxesAndCharges</span><span class="c">: </span><span class="n">0</span></div>
<div class="t mono" style="left:1310.4px;top:845.1px;"><span class="k">campaign</span><span class="c">: </span><span class="z">null</span></div>
<div class="t mono" style="left:1310.4px;top:861.1px;"><span class="k">company</span><span class="c">: </span><span class="s">&quot;Sprinklers Northwest&quot;</span></div>
<div class="t mono" style="left:1310.4px;top:877.1px;"><span class="k">companyAddress</span><span class="c">: </span><span class="z">null</span></div>
<div class="t mono" style="left:1310.4px;top:893.1px;"><span class="k">companyAddressDisplay</span><span class="c">: </span><span class="z">null</span></div>
<div class="t mono" style="left:1310.4px;top:909.1px;"><span class="k">companyContactPerson</span><span class="c">: </span><span class="z">null</span></div>
<svg class="a" style="left:1300.5px;top:928.0px" width="5" height="8" viewBox="0 0 5 8"><path d="M0 0 L5 4 L0 8 Z" fill="#d4d4d6"/></svg>
<div class="t mono" style="left:1310.4px;top:925.1px;"><span class="k">competitors</span><span class="c">: </span><span class="w">[]</span></div>
<div class="t mono" style="left:1310.4px;top:941.1px;"><span class="k">contactDisplay</span><span class="c">: </span><span class="z">null</span></div>
<div class="t mono" style="left:1310.4px;top:957.1px;"><span class="k">contactEmail</span><span class="c">: </span><span class="z">null</span></div>
<div class="t mono" style="left:1310.4px;top:973.1px;"><span class="k">contactMobile</span><span class="c">: </span><span class="z">null</span></div>
<div class="t mono" style="left:1310.4px;top:989.1px;"><span class="k">contactPerson</span><span class="c">: </span><span class="s">&quot;Again Commit&quot;</span></div>
<div class="t mono" style="left:1310.4px;top:1005.1px;"><span class="k">conversionRate</span><span class="c">: </span><span class="n">1</span></div>
<div class="t mono" style="left:1310.4px;top:1021.1px;"><span class="k">couponCode</span><span class="c">: </span><span class="z">null</span></div>
<div class="t mono" style="left:1310.4px;top:1037.1px;"><span class="k">creation</span><span class="c">: </span><span class="s">&quot;2026-02-04 08:37:48.038213&quot;</span></div>
<div class="t mono" style="left:1310.4px;top:1053.1px;"><span class="k">currency</span><span class="c">: </span><span class="s">&quot;USD&quot;</span></div>
<div class="t mono" style="left:1310.4px;top:1069.1px;"><span class="k">customCurrentStatus</span><span class="c">: </span><span class="s">&quot;Won&quot;</span></div>
<div class="a" style="left:1227px;top:115px;width:693px;height:26px;background:#3c3b41"></div>
<div class="a" style="left:1227px;top:141px;width:693px;height:1px;background:#56555b"></div>
<div class="a" style="left:1227px;top:142px;width:693px;height:26px;background:#28272c"></div>
<div class="a" style="left:1227px;top:167px;width:693px;height:1px;background:#56555b"></div>
<svg class="a" style="left:1236px;top:120px" width="16" height="16" viewBox="0 0 16 16"><g fill="#d4d4d6"><rect x="1" y="1" width="1.6" height="1.6"/><rect x="4" y="1" width="1.6" height="1.6"/><rect x="7" y="1" width="1.6" height="1.6"/><rect x="10" y="1" width="1.6" height="1.6"/><rect x="13" y="1" width="1.6" height="1.6"/><rect x="1" y="4" width="1.6" height="1.6"/><rect x="13" y="4" width="1.6" height="1.6"/><rect x="1" y="7" width="1.6" height="1.6"/><rect x="1" y="10" width="1.6" height="1.6"/><rect x="1" y="13" width="1.6" height="1.6"/><rect x="4" y="13" width="1.6" height="1.6"/></g><path d="M7 7 H13 M7 7 V13 M7.2 7.2 L14 14" stroke="#d4d4d6" stroke-width="1.5" fill="none"/></svg>
<svg class="a" style="left:1263px;top:121px" width="18" height="14" viewBox="0 0 18 14"><path d="M3 12 V1.5 H13" fill="none" stroke="#d4d4d6" stroke-width="1.5"/><path d="M0 12.5 H9" stroke="#d4d4d6" stroke-width="1.6"/><rect x="11.7" y="5" width="5" height="8" fill="none" stroke="#d4d4d6" stroke-width="1.5"/></svg>
<div class="a" style="left:1290px;top:120px;width:1px;height:16px;background:#56555b"></div>
<div class="t" style="left:1303px;top:121.7px;font-size:12.5px;line-height:14px;color:#e3e3e3;">Elements</div>
<div class="t" style="left:1375px;top:121.7px;font-size:12.5px;line-height:14px;color:#a8b5fb;">Console</div>
<div class="a" style="left:1365px;top:139px;width:65px;height:3px;background:#a8b5fb;border-radius:2px 2px 0 0"></div>
<div class="t" style="left:1440px;top:121.7px;font-size:12.5px;line-height:14px;color:#e3e3e3;">Sources</div>
<div class="t" style="left:1503px;top:121.7px;font-size:12.5px;line-height:14px;color:#e3e3e3;">Network</div>
<div class="t" style="left:1571px;top:121.7px;font-size:12.5px;line-height:14px;color:#e3e3e3;">Performance</div>
<svg class="a" style="left:1656px;top:122px" width="13" height="12" viewBox="0 0 13 12"><path d="M1 1 L6 6 L1 11 M7 1 L12 6 L7 11" fill="none" stroke="#d4d4d6" stroke-width="1.4"/></svg>
<svg class="a" style="left:1723px;top:122px" width="12" height="12" viewBox="0 0 12 12"><circle cx="6" cy="6" r="6" fill="#e46962"/><path d="M3.8 3.8 L8.2 8.2 M8.2 3.8 L3.8 8.2" stroke="#242328" stroke-width="1.3"/></svg>
<div class="t" style="left:1738px;top:121.7px;font-size:12.5px;line-height:14px;color:#c8c8ca;">24</div>
<svg class="a" style="left:1757px;top:122px" width="13" height="11" viewBox="0 0 13 11"><path d="M6.5 0.5 L12.7 11 H0.3 Z" fill="#f29b4c"/><rect x="5.8" y="3.6" width="1.4" height="4" fill="#242328"/><rect x="5.8" y="8.5" width="1.4" height="1.4" fill="#242328"/></svg>
<div class="t" style="left:1772px;top:121.7px;font-size:12.5px;line-height:14px;color:#c8c8ca;">22</div>
<svg class="a" style="left:1792px;top:123px" width="11" height="11" viewBox="0 0 11 11"><path d="M0 0 H11 V8.5 H2.5 L0 11 Z" fill="#e46962"/><path d="M3.8 2.5 L7.2 6 M7.2 2.5 L3.8 6" stroke="#242328" stroke-width="1"/></svg>
<div class="t" style="left:1805px;top:121.7px;font-size:12.5px;line-height:14px;color:#c8c8ca;">63</div>
<div class="a" style="left:1827px;top:120px;width:1px;height:16px;background:#56555b"></div>
<svg class="a" style="left:1839px;top:121px" width="15" height="15" viewBox="0 0 24 24"><path d="M12 8.5 A3.5 3.5 0 1 0 12 15.5 A3.5 3.5 0 1 0 12 8.5Z" fill="#d4d4d6"/><path d="M10 2 H14 L14.6 4.8 L16.6 5.9 L19.3 5 L21.3 8.5 L19.2 10.4 V13.6 L21.3 15.5 L19.3 19 L16.6 18.1 L14.6 19.2 L14 22 H10 L9.4 19.2 L7.4 18.1 L4.7 19 L2.7 15.5 L4.8 13.6 V10.4 L2.7 8.5 L4.7 5 L7.4 5.9 L9.4 4.8 Z" fill="none" stroke="#d4d4d6" stroke-width="2" stroke-linejoin="round"/></svg>
<svg class="a" style="left:1872px;top:121px" width="4" height="14" viewBox="0 0 4 14"><circle cx="2" cy="2" r="1.6" fill="#d4d4d6"/><circle cx="2" cy="7" r="1.6" fill="#d4d4d6"/><circle cx="2" cy="12" r="1.6" fill="#d4d4d6"/></svg>
<svg class="a" style="left:1895px;top:122px" width="12" height="12" viewBox="0 0 12 12"><path d="M1 1 L11 11 M11 1 L1 11" stroke="#d4d4d6" stroke-width="1.5"/></svg>
<svg class="a" style="left:1236px;top:148px" width="16" height="15" viewBox="0 0 16 15"><rect x="1" y="1" width="13.5" height="13" rx="1.5" fill="none" stroke="#d4d4d6" stroke-width="1.5"/><path d="M4.6 1 V14" stroke="#d4d4d6" stroke-width="1.5"/><path d="M7.5 4.5 L11 7.5 L7.5 10.5 Z" fill="#d4d4d6"/></svg>
<svg class="a" style="left:1263px;top:147px" width="16" height="16" viewBox="0 0 16 16"><circle cx="8" cy="8" r="6.8" fill="none" stroke="#d4d4d6" stroke-width="1.4"/><path d="M3.2 12.8 L12.8 3.2" stroke="#d4d4d6" stroke-width="1.4"/></svg>
<div class="a" style="left:1290px;top:147px;width:1px;height:16px;background:#56555b"></div>
<div class="t" style="left:1303px;top:149.2px;font-size:12.5px;line-height:14px;color:#e3e3e3;">top</div>
<svg class="a" style="left:1327px;top:153px" width="8" height="6" viewBox="0 0 8 6"><path d="M0 0 H8 L4 6 Z" fill="#d4d4d6"/></svg>
<div class="a" style="left:1346px;top:147px;width:1px;height:16px;background:#56555b"></div>
<svg class="a" style="left:1356px;top:149px" width="18" height="12" viewBox="0 0 18 12"><path d="M1 6 C3.5 1.8 6 0.8 9 0.8 C12 0.8 14.5 1.8 17 6 C14.5 10.2 12 11.2 9 11.2 C6 11.2 3.5 10.2 1 6Z" fill="none" stroke="#d4d4d6" stroke-width="1.4"/><circle cx="9" cy="6" r="2.4" fill="none" stroke="#d4d4d6" stroke-width="1.4"/></svg>
<div class="a" style="left:1383px;top:147px;width:1px;height:16px;background:#56555b"></div>
<div class="a" style="left:1391px;top:145px;width:189px;height:20px;background:#3b3a40;border-radius:10px"></div>
<svg class="a" style="left:1401px;top:149px" width="11" height="12" viewBox="0 0 11 12"><path d="M0.8 0.8 H10.2 L6.3 5.6 V11.2 H4.7 V5.6 Z" fill="none" stroke="#d4d4d6" stroke-width="1.3" stroke-linejoin="round"/></svg>
<div class="t" style="left:1419px;top:149.2px;font-size:12.5px;line-height:14px;color:#c4c4c6;">Filter</div>
<div class="t" style="left:1591px;top:149.2px;font-size:12.5px;line-height:14px;color:#e3e3e3;letter-spacing:-.12px">Default levels</div>
<svg class="a" style="left:1670px;top:153px" width="8" height="6" viewBox="0 0 8 6"><path d="M0 0 H8 L4 6 Z" fill="#d4d4d6"/></svg>
<div class="a" style="left:1689px;top:147px;width:1px;height:16px;background:#56555b"></div>
<div class="t" style="left:1695px;top:149.2px;font-size:12.5px;line-height:14px;color:#e3e3e3;letter-spacing:-.55px">90 Issues:</div>
<svg class="a" style="left:1754px;top:150px" width="10" height="10" viewBox="0 0 11 11"><path d="M0 0 H11 V8.5 H2.5 L0 11 Z" fill="#e46962"/><path d="M3.8 2.5 L7.2 6 M7.2 2.5 L3.8 6" stroke="#242328" stroke-width="1"/></svg>
<div class="t" style="left:1767px;top:149.2px;font-size:12.5px;line-height:14px;color:#c8c8ca;">63</div>
<svg class="a" style="left:1787px;top:150px" width="10" height="10" viewBox="0 0 11 11"><path d="M0 0 H11 V8.5 H2.5 L0 11 Z" fill="#a6aaf8"/><path d="M2.5 2.6 H8.5 M2.5 4.8 H6.5" stroke="#242328" stroke-width="1"/></svg>
<div class="t" style="left:1799px;top:149.2px;font-size:12.5px;line-height:14px;color:#c8c8ca;">27</div>
<div class="a" style="left:1819px;top:147px;width:1px;height:16px;background:#56555b"></div>
<div class="t" style="left:1830px;top:149.2px;font-size:12.5px;line-height:14px;color:#9a9a9c;letter-spacing:-.3px">13 hidden</div>
<svg class="a" style="left:1893px;top:148px" width="15" height="15" viewBox="0 0 24 24"><path d="M12 8.5 A3.5 3.5 0 1 0 12 15.5 A3.5 3.5 0 1 0 12 8.5Z" fill="#d4d4d6"/><path d="M10 2 H14 L14.6 4.8 L16.6 5.9 L19.3 5 L21.3 8.5 L19.2 10.4 V13.6 L21.3 15.5 L19.3 19 L16.6 18.1 L14.6 19.2 L14 22 H10 L9.4 19.2 L7.4 18.1 L4.7 19 L2.7 15.5 L4.8 13.6 V10.4 L2.7 8.5 L4.7 5 L7.4 5.9 L9.4 4.8 Z" fill="none" stroke="#d4d4d6" stroke-width="2" stroke-linejoin="round"/></svg>
<div class="a" style="left:1905px;top:168px;width:15px;height:918px;background:#2c2b30"></div>
<svg class="a" style="left:1907px;top:176px" width="11" height="7" viewBox="0 0 11 7"><path d="M0.5 6.5 L5.5 1 L10.5 6.5 Z" fill="#a9a9ab"/></svg>
<svg class="a" style="left:1907px;top:1073px" width="11" height="7" viewBox="0 0 11 7"><path d="M0.5 0.5 L5.5 6 L10.5 0.5 Z" fill="#a9a9ab"/></svg>
<div class="a" style="left:1908px;top:986px;width:9px;height:19px;background:#a6a6a8;border-radius:4.5px"></div>
<div class="a" style="left:1227px;top:1086px;width:693px;height:1px;background:#56555b"></div>
<div class="a" style="left:1227px;top:1087px;width:693px;height:113px;background:#3c3b41"></div>
<div class="a" style="left:1227px;top:1113px;width:693px;height:1px;background:#56555b"></div>
<svg class="a" style="left:1242px;top:1093px" width="4" height="14" viewBox="0 0 4 14"><circle cx="2" cy="2" r="1.5" fill="#d4d4d6"/><circle cx="2" cy="7" r="1.5" fill="#d4d4d6"/><circle cx="2" cy="12" r="1.5" fill="#d4d4d6"/></svg>
<div class="t" style="left:1266px;top:1093.7px;font-size:12.5px;line-height:14px;color:#e3e3e3;">Console</div>
<div class="t" style="left:1331px;top:1093.7px;font-size:12.5px;line-height:14px;color:#a8b5fb;">What's new</div>
<svg class="a" style="left:1399px;top:1095px" width="10" height="10" viewBox="0 0 10 10"><path d="M1 1 L9 9 M9 1 L1 9" stroke="#d4d4d6" stroke-width="1.3"/></svg>
<div class="a" style="left:1321px;top:1111px;width:94px;height:3px;background:#a8b5fb;border-radius:2px 2px 0 0"></div>
<svg class="a" style="left:1867px;top:1093px" width="14" height="14" viewBox="0 0 14 14"><rect x="0.8" y="0.8" width="12.4" height="12.4" rx="1" fill="none" stroke="#d4d4d6" stroke-width="1.5"/><path d="M10 1 V13" stroke="#d4d4d6" stroke-width="1.5"/></svg>
<svg class="a" style="left:1895px;top:1094px" width="12" height="12" viewBox="0 0 12 12"><path d="M1 1 L11 11 M11 1 L1 11" stroke="#d4d4d6" stroke-width="1.5"/></svg>
<svg class="a" style="left:1310px;top:1130px" width="32" height="32" viewBox="0 0 32 32"><circle cx="16" cy="16" r="16" fill="#1a73e8"/><circle cx="16" cy="16" r="12.5" fill="none" stroke="#fff" stroke-width="1.6"/><circle cx="16" cy="16" r="5.2" fill="none" stroke="#fff" stroke-width="1.6"/><path d="M16 10.8 H27.8 M11.5 18.6 L5.8 8.5 M20.5 18.6 L14.5 28.5" stroke="#fff" stroke-width="1.6"/></svg>
<div class="t" style="left:1352px;top:1138.8px;font-size:16.4px;line-height:14px;color:#e8e8ea;">What's new in DevTools 144</div>
<div class="a" style="left:1310px;top:1178px;width:137px;height:32px;background:#c5c7fb;border-radius:16px"></div>
<div class="t" style="left:1323px;top:1182.7px;font-size:12.3px;line-height:14px;color:#2a2c9c;">See all new features</div>
<div class="a" style="left:1905px;top:1114px;width:15px;height:86px;background:#2b2a2f"></div>
<svg class="a" style="left:1907px;top:1119px" width="11" height="7" viewBox="0 0 11 7"><path d="M0.5 6.5 L5.5 1 L10.5 6.5 Z" fill="#a9a9ab"/></svg>
<svg class="a" style="left:1907px;top:1187px" width="11" height="7" viewBox="0 0 11 7"><path d="M0.5 0.5 L5.5 6 L10.5 0.5 Z" fill="#a9a9ab"/></svg>
<div class="a" style="left:1908px;top:1132px;width:9px;height:17px;background:#a7a7a9;border-radius:4.5px"></div>
</body></html>
